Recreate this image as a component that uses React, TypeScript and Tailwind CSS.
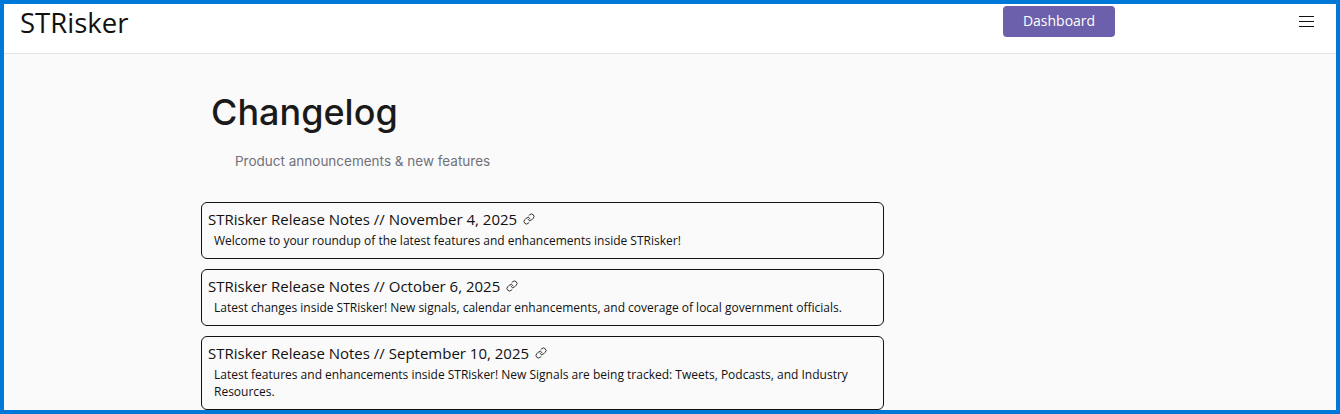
import { Link as LinkIcon } from 'lucide-react';

const notes = [
  {
    title: 'STRisker Release Notes // November 4, 2025',
    body: 'Welcome to your roundup of the latest features and enhancements inside STRisker!',
  },
  {
    title: 'STRisker Release Notes // October 6, 2025',
    body: 'Latest changes inside STRisker! New signals, calendar enhancements, and coverage of local government officials.',
  },
  {
    title: 'STRisker Release Notes // September 10, 2025',
    body: 'Latest features and enhancements inside STRisker! New Signals are being tracked: Tweets, Podcasts, and Industry Resources.',
  },
];

export default function App() {
  return (
    <div className="flex h-[414px] flex-col overflow-hidden border-4 border-[#0078d7] bg-[#fafafa] font-['Open_Sans',sans-serif]">
      {/* Top bar */}
      <header className="flex h-[50px] shrink-0 items-start border-b border-[#e2e2e2] bg-white pl-4 pr-[22px]">
        <span className="w-[983px] text-[27.5px] leading-[37px] text-[#111]">STRisker</span>
        <a className="mt-0.5 flex h-[31px] w-[112px] items-center justify-center rounded bg-[#6c5fab] pb-px text-sm font-medium text-white">
          Dashboard
        </a>
        <div className="ml-auto mt-3 flex w-[15px] flex-col gap-1">
          <span className="h-px bg-[#111]" />
          <span className="h-px bg-[#111]" />
          <span className="h-px bg-[#111]" />
        </div>
      </header>

      {/* Changelog */}
      <main className="ml-[197px] w-[683px]">
        <h1 className="ml-[10px] mt-[34px] font-['Inter',sans-serif] text-4xl leading-[48px] font-medium text-[#1a1a1a]">
          Changelog
        </h1>
        <p className="ml-[34px] mt-[15px] font-['Inter',sans-serif] text-[13.5px] leading-5 text-[#71717a]">
          Product announcements &amp; new features
        </p>
        <div className="mt-[31px] flex flex-col gap-[10.5px]">
          {notes.map((note) => (
            <article key={note.title} className="rounded-md border border-[#111] px-1.5 pt-[5px] pb-[8.5px]">
              <h2 className="flex items-center gap-1.5 text-[15px] leading-[22px] text-[#111]">
                {note.title}
                <LinkIcon className="h-3 w-3 text-[#333]" />
              </h2>
              <p className="mt-0.5 pl-1.5 pr-6 text-xs leading-[17px] text-[#111]">{note.body}</p>
            </article>
          ))}
        </div>
      </main>
    </div>
  );
}
